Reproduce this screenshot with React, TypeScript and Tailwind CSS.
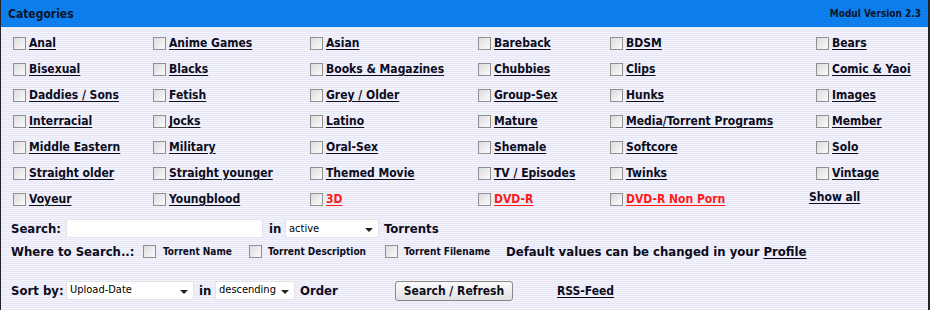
import React from "react";

type Cat = { label: string; red?: boolean };

const COLUMNS: Cat[][] = [
  [{ label: "Anal" }, { label: "Bisexual" }, { label: "Daddies / Sons" }, { label: "Interracial" }, { label: "Middle Eastern" }, { label: "Straight older" }, { label: "Voyeur" }],
  [{ label: "Anime Games" }, { label: "Blacks" }, { label: "Fetish" }, { label: "Jocks" }, { label: "Military" }, { label: "Straight younger" }, { label: "Youngblood" }],
  [{ label: "Asian" }, { label: "Books & Magazines" }, { label: "Grey / Older" }, { label: "Latino" }, { label: "Oral-Sex" }, { label: "Themed Movie" }, { label: "3D", red: true }],
  [{ label: "Bareback" }, { label: "Chubbies" }, { label: "Group-Sex" }, { label: "Mature" }, { label: "Shemale" }, { label: "TV / Episodes" }, { label: "DVD-R", red: true }],
  [{ label: "BDSM" }, { label: "Clips" }, { label: "Hunks" }, { label: "Media/Torrent Programs" }, { label: "Softcore" }, { label: "Twinks" }, { label: "DVD-R Non Porn", red: true }],
  [{ label: "Bears" }, { label: "Comic & Yaoi" }, { label: "Images" }, { label: "Member" }, { label: "Solo" }, { label: "Vintage" }],
];

const font = "font-['DejaVu_Sans_Condensed','DejaVu_Sans',sans-serif]";

function Box() {
  return (
    <span className="inline-block size-[13px] shrink-0 border border-[#8f8f8f] bg-[linear-gradient(135deg,#dcdcdc,#fbfbfb)]" />
  );
}

function Select({ value, width }: { value: string; width: string }) {
  return (
    <span
      className={`flex h-[19px] items-center justify-between rounded-[2px] border border-[#e2e2e8] bg-white pl-[3px] pr-[5px] text-[11px] font-normal text-black ${width}`}
    >
      {value}
      <span className="mt-[3px] border-x-[4px] border-t-[4px] border-x-transparent border-t-[#222]" />
    </span>
  );
}

export default function App() {
  const rows = Array.from({ length: 7 }, (_, r) => r);
  return (
    <div
      className={`h-[310px] w-[930px] border-l border-r-2 border-[#23232b] bg-[repeating-linear-gradient(to_bottom,#f3f3fc_0px,#f3f3fc_1px,#e7e7f5_1px,#e7e7f5_2px)] text-[12px] font-bold text-[#0c0c1c] ${font}`}
    >
      <div className="flex h-[27px] items-center justify-between bg-[repeating-linear-gradient(to_bottom,#0b7ae6_0px,#0b7ae6_1px,#0f83f2_1px,#0f83f2_2px)] pl-[7px] pr-[7px]">
        <span className="text-[12px] text-[#0a1428]">Categories</span>
        <span className="text-[10px] text-[#0a1428]">Modul Version 2.3</span>
      </div>

      <div className="mt-[3px] grid grid-cols-[140px_157px_168px_132px_206px_1fr] pl-[12px]">
        {rows.map((r) =>
          COLUMNS.map((col, c) => {
            const cat = col[r];
            if (!cat) {
              return (
                <div key={`${r}-${c}`} className="flex h-[26px] items-center">
                  <span className="-ml-[7px] -mt-[4px] underline underline-offset-2">Show all</span>
                </div>
              );
            }
            return (
              <div key={`${r}-${c}`} className="flex h-[26px] items-center gap-[3px]">
                <Box />
                <span className={`underline underline-offset-2 ${cat.red ? "text-[#ff1a1a]" : ""}`}>{cat.label}</span>
              </div>
            );
          }),
        )}
      </div>

      <div className="mt-[7px] flex items-center pl-[10px] text-[13px]">
        <span className="w-[55px]">Search:</span>
        <span className="h-[19px] w-[197px] rounded-[2px] border border-[#e2e2e8] bg-white" />
        <span className="ml-[6px] w-[16px]">in</span>
        <Select value="active" width="w-[94px]" />
        <span className="ml-[5px]">Torrents</span>
      </div>

      <div className="mt-[3px] flex h-[20px] items-center pl-[10px] text-[13px]">
        <span className="w-[132px]">Where to Search..:</span>
        <Box />
        <span className="ml-[7px] w-[86px] text-[10px]">Torrent Name</span>
        <Box />
        <span className="ml-[6px] w-[117px] text-[10px]">Torrent Description</span>
        <Box />
        <span className="ml-[6px] w-[102px] text-[10px]">Torrent Filename</span>
        <span>
          Default values can be changed in your <span className="underline underline-offset-2">Profile</span>
        </span>
      </div>

      <div className="mt-[19px] flex items-center pl-[10px] text-[13px]">
        <span className="w-[55px]">Sort by:</span>
        <Select value="Upload-Date" width="w-[128px]" />
        <span className="ml-[5px] w-[16px]">in</span>
        <Select value="descending" width="w-[80px]" />
        <span className="ml-[5px] w-[95px]">Order</span>
        <span className="flex h-[20px] w-[118px] items-center justify-center rounded-[3px] border border-[#8a8a8a] bg-[linear-gradient(to_bottom,#fbfbfb,#e2e2e2)] text-[12px]">
          Search / Refresh
        </span>
        <span className="ml-[44px] text-[12px] underline underline-offset-2">RSS-Feed</span>
      </div>
    </div>
  );
}
